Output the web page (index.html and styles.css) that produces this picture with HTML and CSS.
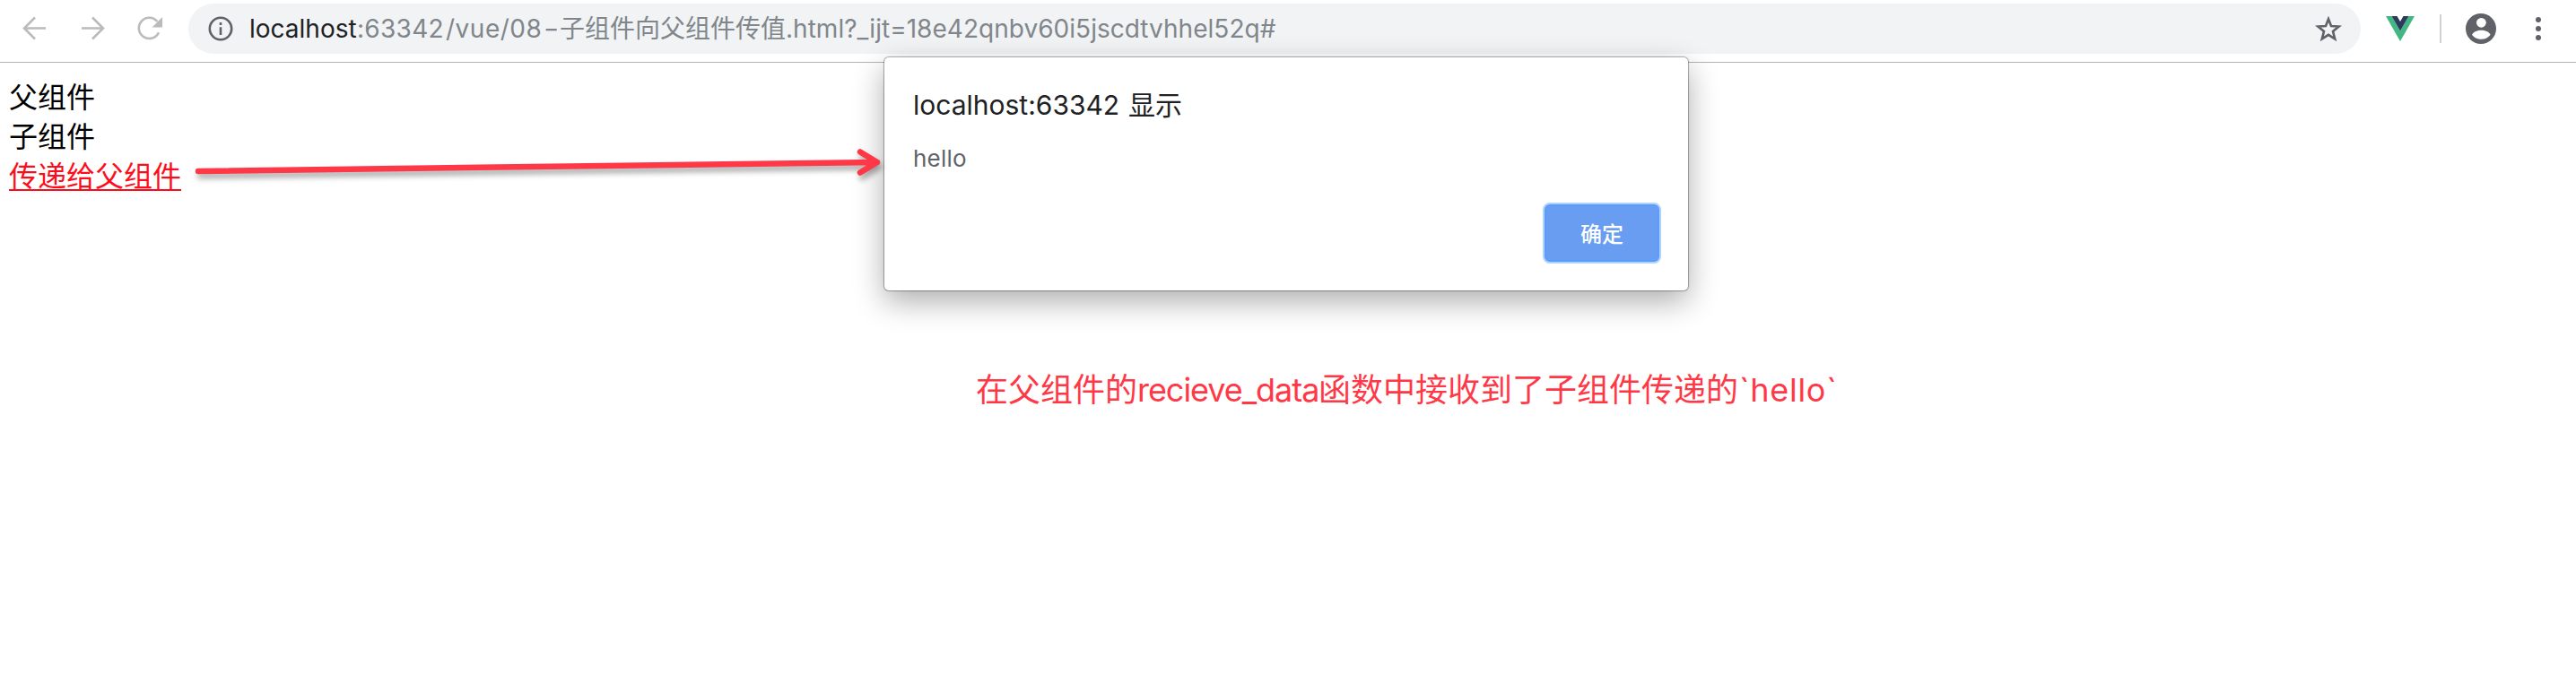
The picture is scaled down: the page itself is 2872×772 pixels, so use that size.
FILE: index.html
```html
<!DOCTYPE html>
<html lang="zh-CN">
<head>
<meta charset="utf-8">
<title>子组件向父组件传值</title>
<link rel="stylesheet" href="styles.css">
</head>
<body>
<header class="toolbar">
  <nav class="nav">
    <svg class="nav-icon" viewBox="0 0 28 28"><path d="M26 13.500H2M14 1.500 2 13.500l12 12"/></svg>
    <svg class="nav-icon" viewBox="0 0 28 28"><path d="M2 13.500h24M14 1.500l12 12-12 12"/></svg>
    <svg class="nav-icon" viewBox="0 0 28 28"><path d="M24 18.2A11.6 11.6 0 1 1 22.4 6"/><path class="solid" d="M28 1v11.5H16.500z"/></svg>
  </nav>
  <div class="omnibox">
    <svg class="info" viewBox="0 0 28 28"><circle cx="14" cy="14" r="12.2"/><path d="M14 12.3V21M14 7v3"/></svg>
    <div class="url"><span class="host">localhost</span><span class="port">:63342</span><span class="path">/vue/08<span class="dash">-</span></span><span class="file">子组件向父组件传值</span><span class="query">.html?_ijt=18e42qnbv60i5jscdtvhhel52q#</span></div>
    <svg class="star" viewBox="0 0 30 28"><path d="M15 3.2 18 11l8.6.5-6.600 5.400 2.200 8.500L15 20.800l-7.200 4.600L10 16.900 3.400 11.500 12 11z"/></svg>
  </div>
  <svg class="vue" viewBox="0 0 32 28"><path fill="#41b883" d="M0 0h6.500L16 16.500 25.500 0H32L16 28z"/><path fill="#2d3a5b" d="M6.500 0h6L16 6l3.500-6h6L16 16.500z"/></svg>
  <div class="divider"></div>
  <svg class="avatar" viewBox="0 0 34 34"><circle cx="17" cy="17" r="17"/><circle class="hole" cx="17.400" cy="10.300" r="5.400"/><path class="hole" d="M7 23.700c2-3.600 6-5 10.400-5s8.400 1.400 10.200 5c-2 3-6 5-10.200 5S9 26.700 7 23.700z"/></svg>
  <svg class="menu" viewBox="0 0 6 26"><circle cx="3" cy="3" r="3"/><circle cx="3" cy="13" r="3"/><circle cx="3" cy="23" r="3"/></svg>
</header>
<main class="page">
  <div>父组件</div>
  <div>子组件</div>
  <a class="send" href="#">传递给父组件</a>
</main>
<section class="dialog">
  <h1 class="dialog-title"><span class="origin">localhost:63342</span><span>显示</span></h1>
  <p class="message">hello</p>
  <button class="ok">确定</button>
</section>
<svg class="arrow" viewBox="0 0 790 60"><path d="M11 31 768 21M749 9.500l19 11.500-19 11.500"/></svg>
<p class="note"><span>在父组件的</span><span class="fn">recieve_data</span><span>函数中接收到了子组件传递的</span><span class="val">`hello`</span></p>
</body>
</html>
```
FILE: styles.css
```css
* { box-sizing: border-box; }
body {
  margin: 0;
  height: 772px;
  overflow: hidden;
  background: #fff;
  font-family: Inter, "Noto Sans CJK SC", sans-serif;
}
.toolbar {
  display: flex;
  align-items: center;
  height: 70px;
  padding: 4px 39px 9px 25px;
  border-bottom: 1px solid #b4b4b4;
}
.toolbar > * { flex: none; }
.nav { display: flex; gap: 36px; width: 185px; }
.nav-icon {
  width: 28px;
  height: 28px;
  fill: none;
  stroke: #babbbd;
  stroke-width: 2.6;
}
.nav-icon .solid { fill: #babbbd; stroke: none; }
.omnibox {
  display: flex;
  align-items: center;
  width: 2422px;
  height: 56px;
  padding: 0 21px 0 22px;
  border-radius: 28px;
  background: #f1f3f4;
}
.info { width: 28px; height: 28px; fill: none; stroke: #5f6368; stroke-width: 2.6; }
.url {
  display: flex;
  flex: 1;
  margin-left: 18px;
  font-size: 28px;
  line-height: 56px;
  white-space: nowrap;
  color: #80868b;
}
.url > span { flex: none; }
.host { width: 120px; color: #202124; }
.port { width: 99px; letter-spacing: .3px; }
.path { width: 127px; letter-spacing: .5px; }
.dash { display: inline-block; margin-left: 2px; transform: scaleX(1.35); transform-origin: left; }
.file { width: 252px; }
.query { letter-spacing: .03px; }
.star { width: 30px; height: 28px; fill: none; stroke: #5f6368; stroke-width: 2.6; }
.vue { width: 32px; height: 28px; margin-left: 28px; }
.divider { width: 2px; height: 32px; margin-left: 28px; background: #d0d1d3; }
.avatar { width: 34px; height: 34px; margin-left: 27px; fill: #5f6368; }
.hole { fill: #fff; }
.menu { width: 6px; height: 26px; margin-left: 44px; fill: #5f6368; }
.page {
  padding: 17px 10px;
  font-size: 32px;
  line-height: 44px;
  color: #000;
}
.send { color: #fc0d1b; text-underline-offset: 3px; text-decoration-thickness: 2px; }
.dialog {
  position: absolute;
  left: 986px;
  top: 64px;
  display: flex;
  flex-direction: column;
  width: 896px;
  height: 260px;
  padding: 32px 30px 28px 32px;
  border-radius: 5px;
  background: #fff;
  box-shadow: 0 0 1px 1px rgba(0,0,0,.32), 0 12px 34px rgba(0,0,0,.33);
}
.dialog-title {
  display: flex;
  margin: 0;
  font-size: 30px;
  font-weight: 400;
  line-height: 42px;
  color: #202124;
}
.origin { width: 240px; }
.message { margin: 19px 0 0; font-size: 26px; line-height: 40px; letter-spacing: .2px; color: #5f6368; }
.ok {
  align-self: flex-end;
  width: 132px;
  height: 68px;
  margin-top: 29px;
  border: 2px solid #afd3ff;
  border-radius: 8px;
  background: #689df2;
  box-shadow: inset 0 0 0 2px #5c9cf8;
  color: #fff;
  font: 500 24px/1 "Noto Sans CJK SC", sans-serif;
}
.arrow {
  position: absolute;
  left: 210px;
  top: 160px;
  width: 790px;
  height: 60px;
  fill: none;
  stroke: #ff3847;
  stroke-width: 6.5;
  stroke-linecap: round;
  stroke-linejoin: round;
  filter: drop-shadow(2px 5px 3px rgba(0,0,0,.35));
}
.note {
  position: absolute;
  left: 1088px;
  top: 409px;
  display: flex;
  margin: 0;
  font-size: 36px;
  line-height: 52px;
  white-space: nowrap;
  color: #ff3847;
}
.fn { width: 202px; letter-spacing: -1.05px; }
.val { margin-left: 1px; letter-spacing: .7px; }
```
